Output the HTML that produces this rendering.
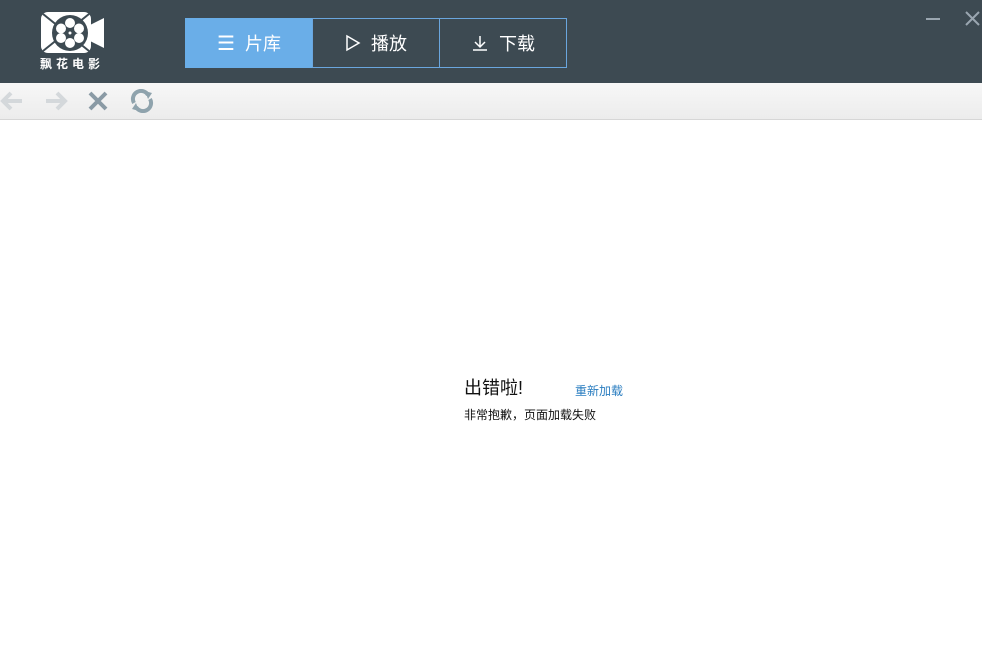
<!DOCTYPE html>
<html><head><meta charset="utf-8"><style>
*{margin:0;padding:0;box-sizing:border-box}
body{width:982px;height:651px;background:#fff;font-family:"Liberation Sans","Noto Sans CJK SC",sans-serif;position:relative;overflow:hidden}
#top{position:absolute;left:0;top:0;width:982px;height:83px;background:#3d4a52}
#tool{position:absolute;left:0;top:83px;width:982px;height:37px;background:linear-gradient(#f7f7f7,#ececec);border-bottom:1px solid #d6d6d6}
.tab{position:absolute;top:18px;height:50px;border:1px solid #6aa6de;color:#fff;font-size:18px;display:flex;align-items:center;justify-content:center;gap:10px}
.t{position:absolute;white-space:nowrap}
</style></head><body>
<div id="top">
<svg style="position:absolute;left:40px;top:11px" width="66" height="44" viewBox="0 0 66 44">
<rect x="1" y="1" width="50" height="41" rx="7" fill="#fff"/>
<polygon points="50,14 64,7 64,37 50,30" fill="#fff"/>
<line x1="3" y1="3" x2="49" y2="40" stroke="#3d4a52" stroke-width="2"/>
<line x1="49" y1="3" x2="3" y2="40" stroke="#3d4a52" stroke-width="2"/>
<circle cx="30" cy="22" r="18" fill="#3d4a52"/>
<circle cx="30" cy="12" r="5" fill="#fff"/><circle cx="30" cy="32" r="5" fill="#fff"/>
<circle cx="21" cy="17.5" r="5" fill="#fff"/><circle cx="39" cy="17.5" r="5" fill="#fff"/>
<circle cx="21" cy="27" r="5" fill="#fff"/><circle cx="39" cy="27" r="5" fill="#fff"/>
<circle cx="30" cy="22" r="1.5" fill="#fff"/>
</svg>
<div class="t" style="left:40px;top:55px;color:#fff;font-size:12px;font-weight:bold;letter-spacing:4px">飘花电影</div>
<div class="tab" style="left:185px;width:128px;background:#6aaee8;border-color:#6aaee8"><span style="font-size:20px;font-weight:300">☰</span><span>片库</span></div>
<div class="tab" style="left:312px;width:128px"><svg width="16" height="18"><polygon points="2,2 14,9 2,16" fill="none" stroke="#fff" stroke-width="1.5"/></svg><span>播放</span></div>
<div class="tab" style="left:439px;width:128px"><svg width="18" height="18"><path d="M9 2V13M4 8L9 13L14 8M2 16H16" fill="none" stroke="#fff" stroke-width="1.5"/></svg><span>下载</span></div>
<div style="position:absolute;left:926px;top:18px;width:14px;height:2px;background:#9aa6b0"></div>
<svg style="position:absolute;left:965px;top:11px" width="15" height="15"><path d="M1 1L14 14M14 1L1 14" stroke="#9aa6b0" stroke-width="2"/></svg>
</div>
<div id="tool">
<svg style="position:absolute;left:0;top:7px" width="24" height="22"><path d="M22 11H4M11 3L3 11L11 19" fill="none" stroke="#d4d8db" stroke-width="4"/></svg>
<svg style="position:absolute;left:44px;top:7px" width="24" height="22"><path d="M2 11H20M13 3L21 11L13 19" fill="none" stroke="#d4d8db" stroke-width="4"/></svg>
<svg style="position:absolute;left:88px;top:8px" width="20" height="20"><path d="M2 2L18 18M18 2L2 18" stroke="#8a9aa5" stroke-width="4"/></svg>
<svg style="position:absolute;left:129px;top:6px" width="26" height="24"><path d="M5 14A8 8 0 0 1 19 6M21 10A8 8 0 0 1 7 18" fill="none" stroke="#8fa3ad" stroke-width="4"/><polygon points="16,2 23,4 19,10" fill="#8fa3ad"/><polygon points="10,22 3,20 7,14" fill="#8fa3ad"/></svg>
</div>
<div class="t" style="left:464px;top:374px;font-size:18px;color:#111">出错啦!</div>
<div class="t" style="left:575px;top:382px;font-size:12px;color:#2a7dc0">重新加载</div>
<div class="t" style="left:464px;top:406px;font-size:12px;color:#111">非常抱歉，页面加载失败</div>
</body></html>
